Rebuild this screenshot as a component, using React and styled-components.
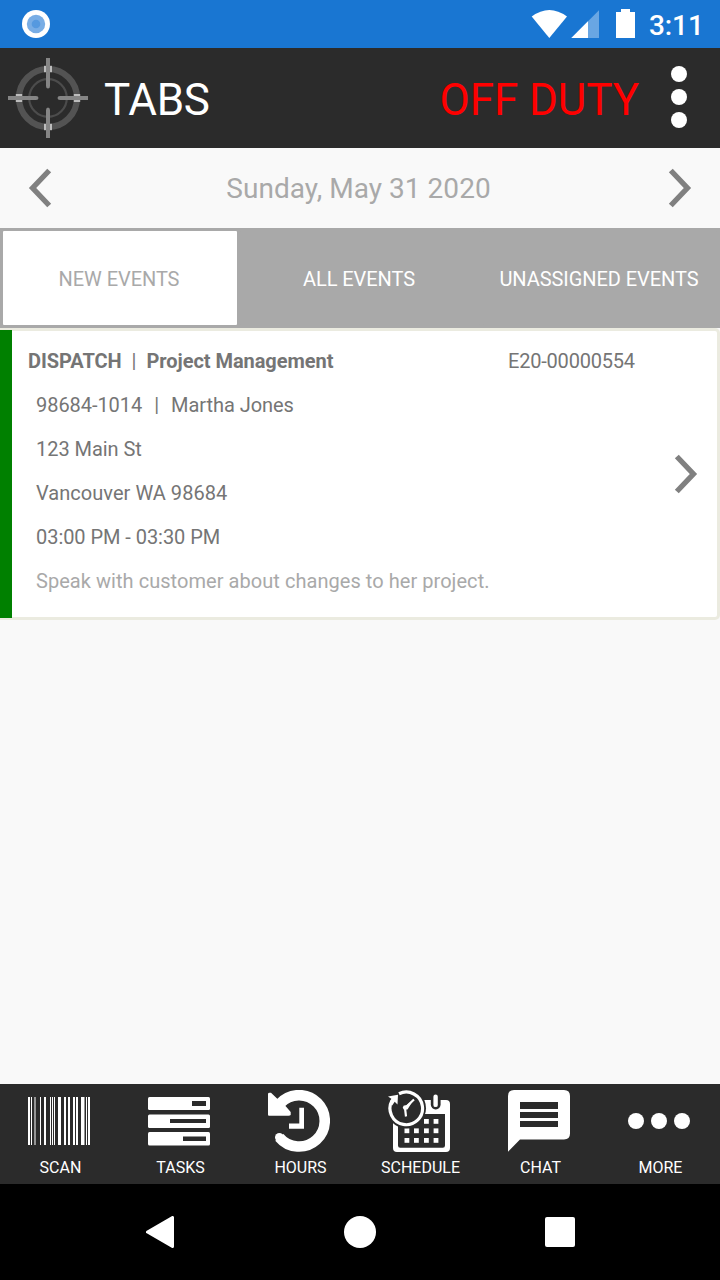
import React, { useState } from "react";
import styled, { createGlobalStyle } from "styled-components";

const GlobalStyle = createGlobalStyle`
    * {
        box-sizing: border-box;
    }

    body {
        margin: 0;
        background-color: #f9f9f9;
        font-family: Roboto, "Liberation Sans", sans-serif;
    }

    svg {
        display: block;
        flex-shrink: 0;
    }
`;

const Screen = styled.div`
    display: flex;
    flex-direction: column;
    width: 720px;
    height: 1280px;
    overflow: hidden;
`;

const StatusBar = styled.div`
    display: flex;
    align-items: center;
    justify-content: space-between;
    height: 48px;
    padding: 0 17px 0 22px;
    background-color: #1976d2;
`;

const StatusIcons = styled.div`
    display: flex;
    align-items: center;
`;

const Clock = styled.span`
    width: 54px;
    margin-left: 14px;
    font-size: 28px;
    line-height: 48px;
    font-weight: 500;
    color: #ffffff;
    white-space: nowrap;
    padding-top: 3px;
    letter-spacing: -0.1px;
`;

const Header = styled.header`
    display: flex;
    align-items: center;
    height: 100px;
    padding: 0 33px 0 8px;
    background-color: #2b2b2b;
`;

const HeaderText = styled.span`
    font-size: 44px;
    line-height: 52px;
    white-space: nowrap;
    padding-top: 4px;
    color: ${(props) => props.$color};
    margin-left: ${(props) => props.$left};
    margin-right: ${(props) => props.$right || "0"};
    letter-spacing: ${(props) => props.$spacing || "0"};
`;

const DateBar = styled.div`
    display: flex;
    align-items: center;
    justify-content: space-between;
    height: 80px;
    padding: 0 28px;
    background-color: #f9f9f9;
`;

const DateText = styled.span`
    font-size: 28px;
    line-height: 34px;
    color: #a9a9a9;
    white-space: nowrap;
    padding-top: 2px;
    margin-right: 3px;
    letter-spacing: 0.04px;
`;

const TabRow = styled.div`
    display: grid;
    grid-template-columns: 234px 1fr 234px;
    gap: 3px;
    height: 100px;
    padding: 3px;
    background-color: #a9a9a9;
`;

const Tab = styled.button`
    border: none;
    border-radius: 1px;
    padding: 2px 2px 0 0;
    font-family: inherit;
    font-size: 20px;
    letter-spacing: -0.06px;
    white-space: nowrap;
    background-color: ${(props) => (props.$active ? "#ffffff" : "#a9a9a9")};
    color: ${(props) => (props.$active ? "#a9a9a9" : "#ffffff")};
`;

const Content = styled.main`
    flex: 1;
    background-color: #f9f9f9;
`;

const EventCard = styled.div`
    display: flex;
    height: 292px;
    border: 3px solid #ebebe0;
    border-left: none;
    border-radius: 0 5px 5px 0;
    background-color: #ffffff;
`;

const EventStripe = styled.div`
    width: 12px;
    height: 288px;
    margin-top: -1px;
    background-color: #008000;
`;

const EventBody = styled.div`
    flex: 1;
    padding: 8px 0 0 16px;
`;

const EventLine = styled.div`
    display: flex;
    height: 44px;
    padding-left: ${(props) => (props.$title ? "0" : "8px")};
    font-size: 20px;
    line-height: 44px;
    letter-spacing: ${(props) => props.$spacing || "0"};
    color: ${(props) => (props.$muted ? "#a9a9a9" : "#757575")};
    white-space: pre;
`;

const EventTitle = styled.span`
    display: flex;
    width: 480px;
    font-weight: 700;
    letter-spacing: -0.05px;
`;

const Divider = styled.span`
    margin: 0 ${(props) => (props.$narrow ? "10px" : "12px")};
    font-weight: 400;
`;

const EventArrow = styled.div`
    display: flex;
    align-items: center;
    padding-right: 19px;
`;

const BottomBar = styled.nav`
    display: grid;
    grid-template-columns: repeat(6, 120px);
    height: 100px;
    background-color: #2b2b2b;
`;

const BottomItem = styled.div`
    display: flex;
    flex-direction: column;
    align-items: center;
    padding-top: 6px;
    color: #ffffff;

    svg {
        margin-right: 2px;
    }
`;

const BottomLabel = styled.span`
    margin-top: 6px;
    padding-left: 1px;
    font-size: 16px;
    line-height: 20px;
`;

const SystemBar = styled.div`
    display: flex;
    align-items: center;
    justify-content: center;
    gap: 168px;
    height: 96px;
    background-color: #000000;
`;

function Chevron({ left }) {
    return (
        <svg width="24" height="40" viewBox="0 0 24 40">
            <path
                d={left ? "M21.2 2.5 L4.6 20 L21.2 37.5" : "M2.8 2.5 L19.4 20 L2.8 37.5"}
                fill="none"
                stroke="#808080"
                strokeWidth="5.4"
            />
        </svg>
    );
}

function RecordIcon() {
    return (
        <svg width="28" height="28" viewBox="0 0 28 28">
            <circle cx="14" cy="14" r="14" fill="#ffffff" />
            <circle cx="14" cy="14" r="9.2" fill="#78ade5" />
            <circle cx="14" cy="14" r="4.3" fill="#5599df" />
        </svg>
    );
}

function SignalIcons() {
    return (
        <svg width="104" height="30" viewBox="531 9 104 30">
            <path d="M531.7 16.5 Q549.3 3.5 567 16.5 L549.3 38 Z" fill="#ffffff" />
            <path d="M599 10.3 V38 H571.3 Z" fill="#69a6e3" />
            <path d="M588 21.3 V38 H571.3 Z" fill="#ffffff" />
            <path d="M621 9 H630 V12 H635 V38 H616 V12 H621 Z" fill="#ffffff" />
        </svg>
    );
}

function CrosshairIcon() {
    return (
        <svg width="80" height="80" viewBox="0 0 80 80">
            <circle cx="40" cy="40" r="29" fill="none" stroke="#535353" strokeWidth="6.2" />
            <circle cx="40" cy="40" r="18.8" fill="none" stroke="#4c4c4c" strokeWidth="2.2" />
            {[0, 90, 180, 270].map((angle) => (
                <g key={angle} transform={`rotate(${angle} 40 40)`}>
                    <rect x="36" y="7.8" width="8" height="6.4" fill="#bcbcbc" />
                    <path d="M38 0 H42 V28 Q42 30.5 40 30.5 Q38 30.5 38 28 Z" fill="#858585" />
                </g>
            ))}
        </svg>
    );
}

function OverflowIcon() {
    return (
        <svg width="16" height="64" viewBox="0 0 16 64">
            {[8, 31, 54].map((cy) => <circle key={cy} cx="8" cy={cy} r="8" fill="#ffffff" />)}
        </svg>
    );
}

// [x, width] of every bar
const BARS = [
    [0, 2], [3, 1], [12, 1], [16, 2], [22, 1], [24, 1], [26, 1], [30, 3],
    [36, 2], [40, 2], [45, 2], [48, 2], [53, 3], [58, 1], [60, 2],
];

const CELLS = [
    [36, 29], [45.6, 29],
    [16.5, 38.4], [26, 38.4], [36, 38.4], [45.6, 38.4],
    [16.5, 48], [26, 48], [36, 48], [45.6, 48],
];

const ICONS = {
    scan: (
        <>
            {BARS.map(([x, width]) => <rect key={x} x={x} y="7" width={width} height="48" />)}
            <rect x="6" y="7" width="2" height="48" fill="#959595" />
            <rect x="56" y="7" width="1" height="48" fill="#959595" />
        </>
    ),
    tasks: (
        <>
            <rect x="0" y="7" width="62" height="13" rx="1.5" />
            <rect x="0" y="24.4" width="62" height="13.6" rx="1.5" />
            <rect x="0" y="42" width="62" height="13.6" rx="1.5" />
            <g fill="#2b2b2b">
                <rect x="44" y="11" width="14" height="5" />
                <rect x="22" y="29" width="36" height="4" />
                <rect x="35" y="46.5" width="23" height="4.5" />
            </g>
        </>
    ),
    hours: (
        <>
            <path d="M11.3 47.3 A25.7 25.7 0 1 0 12.2 13.4" fill="none" stroke="currentColor" strokeWidth="10.6" />
            <circle cx="11.4" cy="47.3" r="4.4" />
            <path d="M0 4 Q0 2.7 1.5 2.7 H3 L8.5 8 L17.5 16 L22.7 22 V25 Q22 25.7 20.5 25.7 H1 Q0 25.7 0 24.5 Z" />
            <path d="M31.3 17.8 H36 V38.8 H21 V33.4 H31.3 Z" />
        </>
    ),
    schedule: (
        <>
            <path
                fillRule="evenodd"
                d="M9 10 H58 Q62 10 62 14 V58 Q62 62 58 62 H9 Q5 62 5 58 V14 Q5 10 9 10 Z M10 24 V55.5 Q10 57.7 12.2 57.7 H54.8 Q57 57.7 57 55.5 V24 Z"
            />
            <rect x="42.8" y="3" width="9.8" height="16.4" rx="4.8" fill="#2b2b2b" />
            <rect x="45.4" y="4.5" width="4.4" height="12.6" rx="2.2" />
            {CELLS.map(([x, y]) => <rect key={`${x}-${y}`} x={x} y={y} width="4.8" height="4.8" />)}
            <circle cx="18" cy="18.2" r="20" fill="#2b2b2b" />
            <path d="M11 3.8 A16.3 16.3 0 1 1 4 10.5" fill="none" stroke="currentColor" strokeWidth="3.2" />
            <path d="M0 6.5 L10 4.7 L9.5 14.5 L6.7 11.8 L4.2 15.5 L1.7 13.5 L3.3 8.8 Z" />
            <path d="M26 9.5 L17 18 L18 26.5" fill="none" stroke="currentColor" strokeWidth="2.2" />
            <path d="M25.8 9.5 L19.5 19.5 L15 18 Z" />
            <circle cx="17.3" cy="17.6" r="2.4" />
        </>
    ),
    chat: (
        <>
            <path d="M6 0 H56 Q62 0 62 6 V43.5 Q62 49.4 56 49.4 H12 L0 61.8 V6 Q0 0 6 0 Z" />
            <g fill="#2b2b2b">
                <rect x="12" y="12" width="38" height="7" />
                <rect x="12" y="22" width="38" height="6" />
                <rect x="12" y="31" width="38" height="6" />
            </g>
        </>
    ),
    more: [8, 31, 54].map((cx) => <circle key={cx} cx={cx} cy="31" r="8" />),
};

const NAV_ITEMS = [
    { icon: "scan", label: "SCAN" },
    { icon: "tasks", label: "TASKS" },
    { icon: "hours", label: "HOURS" },
    { icon: "schedule", label: "SCHEDULE" },
    { icon: "chat", label: "CHAT" },
    { icon: "more", label: "MORE" },
];

const TABS = ["NEW EVENTS", "ALL EVENTS", "UNASSIGNED EVENTS"];

function App() {
    const [activeTab, setActiveTab] = useState(0);

    return (
        <Screen>
            <GlobalStyle />
            <StatusBar>
                <RecordIcon />
                <StatusIcons>
                    <SignalIcons />
                    <Clock>3:11</Clock>
                </StatusIcons>
            </StatusBar>

            <Header>
                <CrosshairIcon />
                <HeaderText $color="#ffffff" $left="16px" $spacing="-0.3px">TABS</HeaderText>
                <HeaderText $color="#ff0000" $left="auto" $right="32px" $spacing="-0.1px">OFF DUTY</HeaderText>
                <OverflowIcon />
            </Header>

            <DateBar>
                <Chevron left />
                <DateText>Sunday, May 31 2020</DateText>
                <Chevron />
            </DateBar>

            <TabRow>
                {TABS.map((name, index) => (
                    <Tab key={name} $active={index === activeTab} onClick={() => setActiveTab(index)}>
                        {name}
                    </Tab>
                ))}
            </TabRow>

            <Content>
                <EventCard>
                    <EventStripe />
                    <EventBody>
                        <EventLine $title $spacing="-0.2px">
                            <EventTitle>
                                <span>DISPATCH</span>
                                <Divider $narrow>|</Divider>
                                <span>Project Management</span>
                            </EventTitle>
                            <span>E20-00000554</span>
                        </EventLine>
                        <EventLine $spacing="-0.05px">
                            <span>98684-1014</span>
                            <Divider>|</Divider>
                            <span>Martha Jones</span>
                        </EventLine>
                        <EventLine $spacing="-0.05px">123 Main St</EventLine>
                        <EventLine $spacing="0.04px">Vancouver WA 98684</EventLine>
                        <EventLine $spacing="-0.05px">03:00 PM - 03:30 PM</EventLine>
                        <EventLine $muted $spacing="0.05px">Speak with customer about changes to her project.</EventLine>
                    </EventBody>
                    <EventArrow>
                        <Chevron />
                    </EventArrow>
                </EventCard>
            </Content>

            <BottomBar>
                {NAV_ITEMS.map((item) => (
                    <BottomItem key={item.icon}>
                        <svg width="62" height="62" viewBox="0 0 62 62" fill="currentColor">
                            {ICONS[item.icon]}
                        </svg>
                        <BottomLabel>{item.label}</BottomLabel>
                    </BottomItem>
                ))}
            </BottomBar>

            <SystemBar>
                <svg width="32" height="32" viewBox="0 0 32 32">
                    <path d="M28.5 1.5 V30.5 L3.5 16 Z" fill="#ffffff" stroke="#ffffff" strokeWidth="3" strokeLinejoin="round" />
                </svg>
                <svg width="32" height="32" viewBox="0 0 32 32">
                    <circle cx="16" cy="16" r="16" fill="#ffffff" />
                </svg>
                <svg width="32" height="32" viewBox="0 0 32 32">
                    <rect x="1" y="1" width="30" height="30" rx="2" fill="#ffffff" />
                </svg>
            </SystemBar>
        </Screen>
    );
}

export default App;
